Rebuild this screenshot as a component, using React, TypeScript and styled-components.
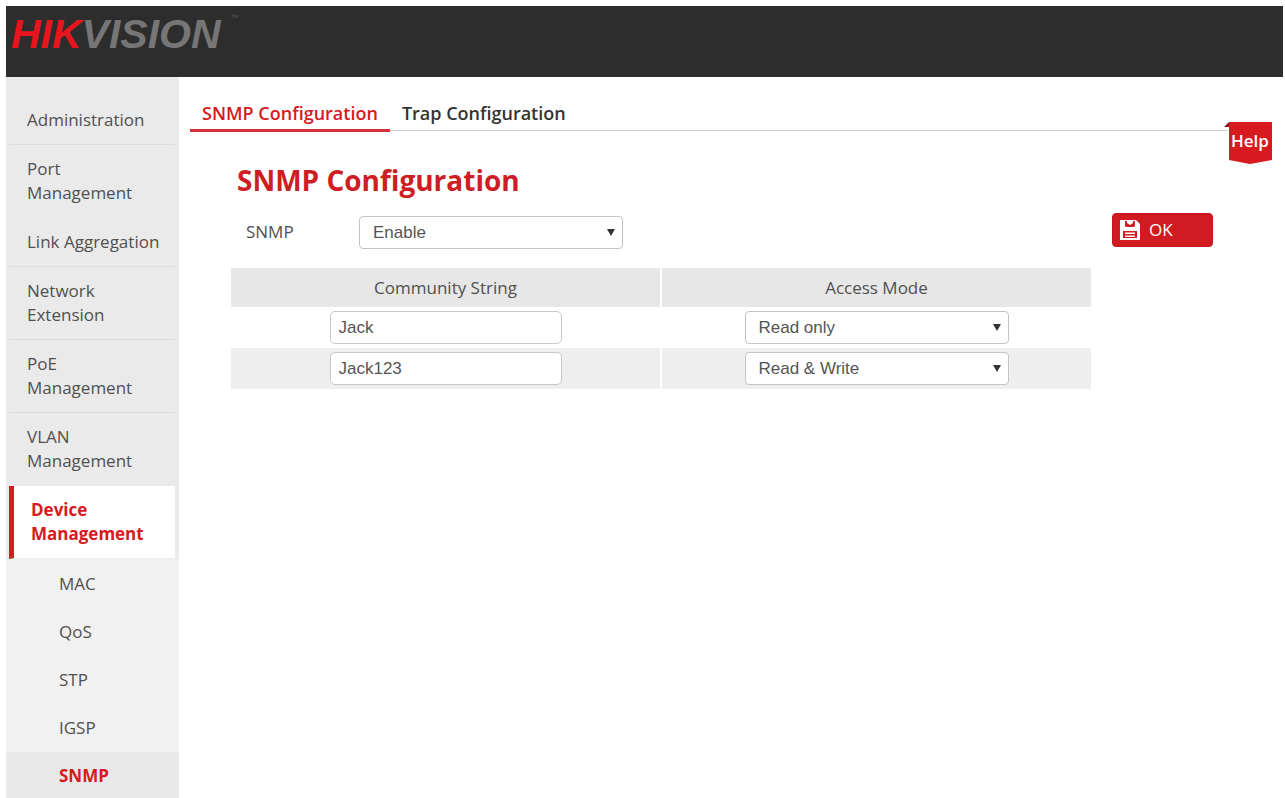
import React, { useState } from "react";
import styled, { createGlobalStyle } from "styled-components";

const red = "#d71920";
const uiFont = `"Open Sans", "Noto Sans", sans-serif`;
const fieldFont = `"Liberation Sans", Arial, sans-serif`;

const GlobalStyle = createGlobalStyle`
  *, *::before, *::after { box-sizing: border-box; }
  body { margin: 0; background: #fff; color: #505050; font: 17px/24px ${uiFont}; }
`;

const Page = styled.div`
  display: flex;
  flex-direction: column;
  height: 100vh;
  padding: 6px 2px 0 6px;
  overflow: hidden;
`;

const Header = styled.header`
  flex: none;
  display: flex;
  align-items: flex-start;
  height: 71px;
  padding: 8px 5px;
  background: #2d2d2d;
`;

const Logo = styled.a`
  display: flex;
  font: italic bold 41px/40px ${fieldFont};
  color: #767676;
  text-decoration: none;
`;

const LogoRed = styled.span`
  color: #e8141e;
`;

const Trademark = styled.span`
  margin-left: 10px;
  font: 8px/8px ${fieldFont};
  color: #5c5c5c;
`;

const Columns = styled.div`
  flex: 1;
  display: flex;
  min-height: 0;
`;

const Sidebar = styled.nav`
  flex: none;
  width: 173px;
  padding-top: 19px;
  background: #eaeaea;
  overflow: hidden;
`;

const List = styled.ul`
  margin: 0;
  padding: 0;
  list-style: none;
`;

const MenuLink = styled.a<{ $active?: boolean; $divider?: boolean }>`
  display: block;
  margin: 0 4px 0 3px;
  padding: ${(p) => (p.$active ? "12px 20px 12px 17px" : "12px 0 12px 18px")};
  border-left: ${(p) => (p.$active ? `5px solid ${red}` : "none")};
  border-bottom: 1px solid ${(p) => (p.$divider ? "#dcdcdc" : "transparent")};
  background: ${(p) => (p.$active ? "#fff" : "transparent")};
  background-clip: padding-box;
  color: ${(p) => (p.$active ? red : "#505050")};
  font-weight: ${(p) => (p.$active ? 700 : 400)};
  text-decoration: none;
`;

const MenuText = styled.span<{ $wrap?: boolean }>`
  display: block;
  width: ${(p) => (p.$wrap ? "min-content" : "auto")};
  white-space: ${(p) => (p.$wrap ? "normal" : "nowrap")};
`;

const SubList = styled(List)`
  padding-top: 1px;
  background: #f1f1f1;
`;

const SubLink = styled.a<{ $active?: boolean }>`
  display: block;
  padding: 12px 0 12px 53px;
  background: ${(p) => (p.$active ? "#e9e9e9" : "transparent")};
  color: ${(p) => (p.$active ? red : "#505050")};
  font-weight: ${(p) => (p.$active ? 700 : 400)};
  text-decoration: none;
`;

const Main = styled.main`
  flex: 1;
  min-width: 0;
  padding: 20px 11px 0 11px;
`;

const TopRow = styled.div`
  display: flex;
  align-items: flex-start;
`;

const Tabs = styled.div`
  flex: 1;
  display: flex;
  height: 34px;
  border-bottom: 1px solid #cfcfcf;
`;

const Tab = styled.a<{ $active?: boolean }>`
  height: 35px;
  padding: 4px 12px 0;
  border-bottom: 3px solid ${(p) => (p.$active ? "#d0323a" : "transparent")};
  color: ${(p) => (p.$active ? red : "#333")};
  font-size: 18px;
  font-weight: 600;
  white-space: nowrap;
  text-decoration: none;
`;

const HelpButton = styled.button`
  position: relative;
  width: 44px;
  height: 44px;
  margin-top: 24px;
  padding: 0 0 4px;
  border: 0;
  background: none;
  color: #fff;
  font: 600 17px/24px ${uiFont};
`;

const HelpShape = styled.svg`
  position: absolute;
  top: 0;
  right: 0;
`;

const HelpText = styled.span`
  position: relative;
`;

const Form = styled.form`
  padding: 0 59px 0 41px;
`;

const Title = styled.h1`
  margin: 0;
  padding: 0 6px;
  color: #cf1d24;
  font: 700 28px/30px ${uiFont};
`;

const FieldRow = styled.div`
  display: flex;
  align-items: flex-end;
  height: 36px;
  margin: 18px 0 19px;
`;

const FieldLabel = styled.label`
  width: 128px;
  padding: 0 0 5px 15px;
`;

const SelectBox = styled.span`
  position: relative;
  display: inline-block;
  width: 264px;
  vertical-align: middle;
`;

const Select = styled.select`
  appearance: none;
  display: block;
  width: 100%;
  height: 33px;
  padding: 0 24px 0 13px;
  border: 1px solid #c4c4c4;
  border-radius: 4px;
  background: #fff;
  color: #555;
  font: 17px/24px ${fieldFont};
`;

const Arrow = styled.svg`
  position: absolute;
  top: 13px;
  right: 8px;
  pointer-events: none;
`;

const TextInput = styled.input`
  display: block;
  width: 232px;
  height: 33px;
  margin: 0 auto;
  padding: 0 8px;
  border: 1px solid #c8c8c8;
  border-radius: 5px;
  background: #fff;
  color: #555;
  font: 17px/24px ${fieldFont};
`;

const OkButton = styled.button`
  display: flex;
  align-self: flex-start;
  align-items: center;
  gap: 8px;
  width: 101px;
  height: 34px;
  margin-left: auto;
  padding: 0 7px 0 6px;
  border: 1px solid #c4161d;
  border-radius: 4px;
  background: #d01b22;
  color: #fff;
  font: 17px/24px ${uiFont};
`;

const TableWrap = styled.div`
  margin-right: 122px;
`;

const Table = styled.table`
  width: 100%;
  table-layout: fixed;
  border-collapse: collapse;
`;

const HeadCell = styled.th`
  height: 39px;
  padding: 0;
  background: #e7e7e7;
  font-weight: 400;

  & + & { border-left: 2px solid #fff; }
`;

const Row = styled.tr`
  &:nth-child(even) { background: #eee; }
`;

const Cell = styled.td`
  height: 41px;
  padding: 0;
  text-align: center;

  & + & { border-left: 2px solid #fff; }
`;

const menu = [
  { label: "Administration", divider: true },
  { label: "Port Management", wrap: true },
  { label: "Link Aggregation", divider: true },
  { label: "Network Extension", wrap: true, divider: true },
  { label: "PoE Management", wrap: true, divider: true },
  { label: "VLAN Management", wrap: true },
  { label: "Device Management", wrap: true, active: true },
];

const subMenu = ["MAC", "QoS", "STP", "IGSP", "SNMP"];

const communities = [
  { name: "Jack", mode: "Read only" },
  { name: "Jack123", mode: "Read & Write" },
];

function SaveIcon() {
  return (
    <svg width="22" height="20" viewBox="0 0 22 20" aria-hidden="true">
      <path
        fill="#fff"
        fillRule="evenodd"
        d="M1 0H17L21 4V20H1ZM6 1V6L7 7H15L16 6V1H14V3L11 5L8 3V1ZM4 11V18H18V11Z"
      />
      <path fill="#fff" d="M6 12.5H16V14H6ZM6 15.5H16V17H6Z" />
    </svg>
  );
}

type DropDownProps = {
  id?: string;
  label?: string;
  initial: string;
  options: string[];
};

function DropDown({ id, label, initial, options }: DropDownProps) {
  const [value, setValue] = useState(initial);
  return (
    <SelectBox>
      <Select id={id} aria-label={label} value={value} onChange={(e) => setValue(e.target.value)}>
        {options.map((o) => (
          <option key={o}>{o}</option>
        ))}
      </Select>
      <Arrow width="8" height="7" viewBox="0 0 8 7" aria-hidden="true">
        <path d="M0 0H8L4 7Z" fill="#333" />
      </Arrow>
    </SelectBox>
  );
}

export default function App() {
  return (
    <Page>
      <GlobalStyle />
      <Header>
        <Logo href="#">
          <LogoRed>HIK</LogoRed>VISION<Trademark>™</Trademark>
        </Logo>
      </Header>
      <Columns>
        <Sidebar>
          <List>
            {menu.map((m) => (
              <li key={m.label}>
                <MenuLink href="#" $active={m.active} $divider={m.divider}>
                  <MenuText $wrap={m.wrap}>{m.label}</MenuText>
                </MenuLink>
              </li>
            ))}
          </List>
          <SubList>
            {subMenu.map((s) => (
              <li key={s}>
                <SubLink href="#" $active={s === "SNMP"}>{s}</SubLink>
              </li>
            ))}
          </SubList>
        </Sidebar>
        <Main>
          <TopRow>
            <Tabs>
              <Tab href="#" $active>SNMP Configuration</Tab>
              <Tab href="#">Trap Configuration</Tab>
            </Tabs>
            <HelpButton type="button">
              <HelpShape width="48" height="44" viewBox="0 0 48 44" aria-hidden="true">
                <path d="M0 6L5 1V6Z" fill="#8e1318" />
                <path d="M5 1H48V39L26 43L5 39Z" fill={red} />
              </HelpShape>
              <HelpText>Help</HelpText>
            </HelpButton>
          </TopRow>
          <Form onSubmit={(e) => e.preventDefault()}>
            <Title>SNMP Configuration</Title>
            <FieldRow>
              <FieldLabel htmlFor="snmp">SNMP</FieldLabel>
              <DropDown id="snmp" initial="Enable" options={["Enable", "Disable"]} />
              <OkButton type="submit">
                <SaveIcon />
                OK
              </OkButton>
            </FieldRow>
            <TableWrap>
              <Table>
                <thead>
                  <tr>
                    <HeadCell scope="col">Community String</HeadCell>
                    <HeadCell scope="col">Access Mode</HeadCell>
                  </tr>
                </thead>
                <tbody>
                  {communities.map((c) => (
                    <Row key={c.name}>
                      <Cell>
                        <TextInput aria-label="Community String" defaultValue={c.name} />
                      </Cell>
                      <Cell>
                        <DropDown
                          label="Access Mode"
                          initial={c.mode}
                          options={["Read only", "Read & Write"]}
                        />
                      </Cell>
                    </Row>
                  ))}
                </tbody>
              </Table>
            </TableWrap>
          </Form>
        </Main>
      </Columns>
    </Page>
  );
}
